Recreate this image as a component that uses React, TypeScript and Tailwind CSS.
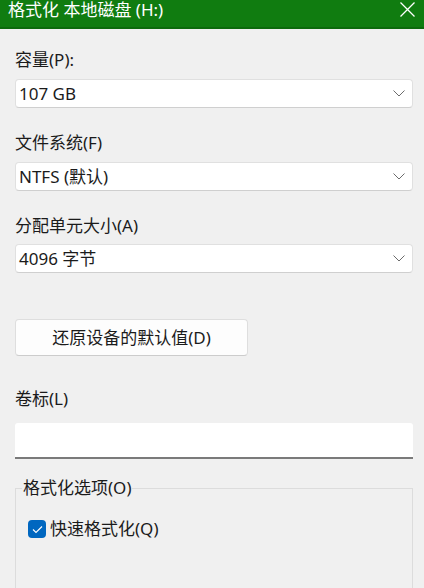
import React from "react";

const font = {
  fontFamily: '"Noto Sans", "Noto Sans CJK SC", sans-serif',
};

const Chevron = () => (
  <svg width="12" height="7" viewBox="0 0 12 7" fill="none" className="shrink-0">
    <path d="M0.5 0.5 L6 6 L11.5 0.5" stroke="#6b6b6b" strokeWidth="1" />
  </svg>
);

const Select = ({ value, className = "" }: { value: string; className?: string }) => (
  <div
    className={`flex h-[29px] items-center justify-between rounded-[4px] border border-[#e0e0e0] border-b-[#cfcfcf] bg-white pl-[3px] pr-[7px] text-[17px] leading-none text-[#1b1b1b] ${className}`}
  >
    <span>{value}</span>
    <Chevron />
  </div>
);

const Label = ({ children, className = "" }: { children: React.ReactNode; className?: string }) => (
  <div className={`h-[24px] text-[17px] leading-[24px] text-[#1b1b1b] ${className}`}>{children}</div>
);

export default function App() {
  return (
    <div className="flex h-[588px] w-[424px] flex-col overflow-hidden bg-[#f0f0f0]" style={font}>
      {/* title bar */}
      <div className="flex h-[29px] shrink-0 items-start justify-between border-b-[2px] border-[#0c6a0c] bg-[#107c10] pl-[8px] pr-[9px] pt-[1px] text-white">
        <span className="text-[17px] leading-[18px]">格式化 本地磁盘 (H:)</span>
        <svg width="15" height="15" viewBox="0 0 15 15" className="mt-[1px]">
          <path d="M0.5 0.5 L14.5 14.5 M14.5 0.5 L0.5 14.5" stroke="white" strokeWidth="1.3" />
        </svg>
      </div>

      <div className="flex flex-col px-[15px] pr-[11px]">
        <Label className="mt-[19px]">容量(P):</Label>
        <Select value="107 GB" className="mt-[7px]" />

        <Label className="mt-[23px]">文件系统(F)</Label>
        <Select value="NTFS (默认)" className="mt-[7px]" />

        <Label className="mt-[23px]">分配单元大小(A)</Label>
        <Select value="4096 字节" className="mt-[6px]" />

        <button className="mt-[46px] h-[37px] w-[233px] rounded-[4px] border border-[#dedede] border-b-[#cccccc] bg-[#fdfdfd] text-[17px] text-[#1b1b1b]">
          还原设备的默认值(D)
        </button>

        <Label className="mt-[31px]">卷标(L)</Label>
        <div className="mt-[12px] h-[36px] rounded-t-[3px] border-b-[2px] border-[#7a7a7a] bg-white" />

        <fieldset className="mt-[17px] h-[140px] border border-[#dcdcdc] pl-[12px] pt-[17px]">
          <legend className="-ml-[6px] px-[1px] text-[17px] leading-[24px] text-[#1b1b1b]">格式化选项(O)</legend>
          <div className="flex items-center gap-[4px]">
            <div className="flex h-[18px] w-[18px] items-center justify-center rounded-[4px] bg-[#0067c0]">
              <svg width="11" height="9" viewBox="0 0 11 9" fill="none">
                <path d="M1 4.5 L4 7.5 L10 1.5" stroke="white" strokeWidth="1.1" />
              </svg>
            </div>
            <span className="text-[17px] leading-[24px] text-[#1b1b1b]">快速格式化(Q)</span>
          </div>
        </fieldset>
      </div>
    </div>
  );
}
